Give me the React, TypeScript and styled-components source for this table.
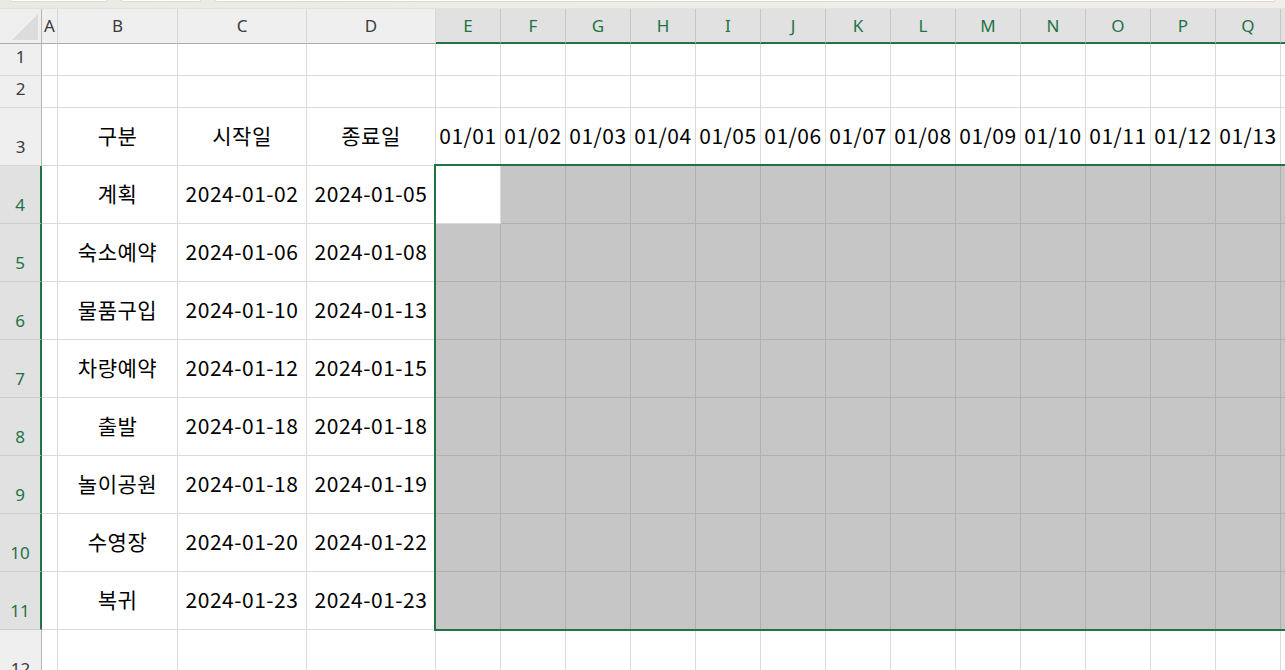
import React from "react";
import styled, { createGlobalStyle, css } from "styled-components";

const GlobalStyle = createGlobalStyle`
  html, body { margin: 0; padding: 0; background: #ffffff; overflow: hidden; }
  * { box-sizing: border-box; }
`;

const GREEN = "#217346";
const GRID = "#dadada";
const FILL = "#c6c6c6";
const FILL_LINE = "#b1b1b1";

const COLS = ["A", "B", "C", "D", "E", "F", "G", "H", "I", "J", "K", "L", "M", "N", "O", "P", "Q", ""];
const COL_WIDTHS = [16, 120, 129, 129, ...Array(14).fill(65)];
const ROW_HEIGHTS = [32, 32, 58, 58, 58, 58, 58, 58, 58, 58, 58, 58];
const DATES = ["01/01", "01/02", "01/03", "01/04", "01/05", "01/06", "01/07", "01/08", "01/09", "01/10", "01/11", "01/12", "01/13", ""];

const TASKS: [string, string, string][] = [
  ["계획", "2024-01-02", "2024-01-05"],
  ["숙소예약", "2024-01-06", "2024-01-08"],
  ["물품구입", "2024-01-10", "2024-01-13"],
  ["차량예약", "2024-01-12", "2024-01-15"],
  ["출발", "2024-01-18", "2024-01-18"],
  ["놀이공원", "2024-01-18", "2024-01-19"],
  ["수영장", "2024-01-20", "2024-01-22"],
  ["복귀", "2024-01-23", "2024-01-23"],
];

const Page = styled.div`
  width: 1285px;
  height: 670px;
  display: flex;
  flex-direction: column;
  overflow: hidden;
  background: #fff;
`;

const TopStrip = styled.div`
  height: 9px;
  flex: none;
  display: flex;
  gap: 14px;
  padding-left: 10px;
  background: linear-gradient(90deg, #e7ebe1 0%, #eceee6 45%, #f2ede9 100%);
  border-bottom: 1px solid #e2e2e2;
`;

const StripBox = styled.div<{ $w: number }>`
  width: ${(p) => p.$w}px;
  height: 2px;
  background: #ffffff;
  border: 1px solid #d9dcd4;
  border-top: none;
  border-radius: 0 0 3px 3px;
`;

const SheetArea = styled.div`
  position: relative;
  flex: 1;
  overflow: hidden;
`;

const Grid = styled.div`
  display: grid;
  grid-template-columns: 42px ${COL_WIDTHS.map((w) => `${w}px`).join(" ")};
  grid-template-rows: 35px ${ROW_HEIGHTS.map((h) => `${h}px`).join(" ")};
  width: max-content;
`;

const headerFont = css`
  font-family: "Noto Sans", "Open Sans", sans-serif;
  font-size: 17px;
`;

const Corner = styled.div`
  position: relative;
  background: #efefef;
  border-right: 1px solid #b5b5b5;
  border-bottom: 1px solid #ababab;
`;

const CornerTriangle = styled.span`
  position: absolute;
  right: 3px;
  bottom: 3px;
  width: 26px;
  height: 26px;
  background: #dcdcdc;
  clip-path: polygon(100% 0, 100% 100%, 0 100%);
`;

const ColHeader = styled.div<{ $sel: boolean }>`
  ${headerFont};
  display: flex;
  align-items: center;
  justify-content: center;
  padding-bottom: 1px;
  background: ${(p) => (p.$sel ? "#e1e1e1" : "#efefef")};
  color: ${(p) => (p.$sel ? GREEN : "#3b3b3b")};
  border-right: 1px solid ${(p) => (p.$sel ? "#c6c6c6" : "#d6d6d6")};
  border-bottom: ${(p) => (p.$sel ? `2px solid ${GREEN}` : "1px solid #ababab")};
  overflow: hidden;
`;

const RowHeader = styled.div<{ $sel: boolean }>`
  ${headerFont};
  display: flex;
  align-items: flex-end;
  justify-content: center;
  padding-bottom: 3px;
  background: ${(p) => (p.$sel ? "#e1e1e1" : "#efefef")};
  color: ${(p) => (p.$sel ? GREEN : "#3b3b3b")};
  border-right: ${(p) => (p.$sel ? `2px solid ${GREEN}` : "1px solid #b5b5b5")};
  border-bottom: 1px solid ${(p) => (p.$sel ? "#cdcdcd" : "#d6d6d6")};
  line-height: 30px;
  overflow: hidden;
`;

const Cell = styled.div<{ $fill?: boolean }>`
  font-family: "Noto Sans CJK KR", "Noto Sans", sans-serif;
  font-size: 21px;
  letter-spacing: 0.5px;
  color: #000;
  display: flex;
  align-items: center;
  justify-content: center;
  padding-bottom: 4px;
  white-space: nowrap;
  overflow: visible;
  background: ${(p) => (p.$fill ? FILL : "#ffffff")};
  border-right: 1px solid ${(p) => (p.$fill ? FILL_LINE : GRID)};
  border-bottom: 1px solid ${(p) => (p.$fill ? FILL_LINE : GRID)};
`;

const Selection = styled.div`
  position: absolute;
  left: 434px;
  top: 155px;
  width: 1000px;
  height: 467px;
  border: 2px solid ${GREEN};
  pointer-events: none;
`;

function rowContent(r: number): { text: string; fill: boolean }[] {
  return COLS.map((_, ci) => {
    let text = "";
    let fill = false;
    if (r === 3) {
      if (ci === 1) text = "구분";
      if (ci === 2) text = "시작일";
      if (ci === 3) text = "종료일";
      if (ci >= 4) text = DATES[ci - 4];
    }
    if (r >= 4 && r <= 11) {
      const t = TASKS[r - 4];
      if (ci === 1) text = t[0];
      if (ci === 2) text = t[1];
      if (ci === 3) text = t[2];
      if (ci >= 4) fill = !(r === 4 && ci === 4);
    }
    return { text, fill };
  });
}

export default function App() {
  return (
    <Page>
      <GlobalStyle />
      <TopStrip>
        <StripBox $w={97} />
        <StripBox $w={80} />
        <StripBox $w={1060} />
      </TopStrip>
      <SheetArea>
        <Grid>
          <Corner>
            <CornerTriangle />
          </Corner>
          {COLS.map((c, i) => (
            <ColHeader key={i} $sel={i >= 4}>
              {c}
            </ColHeader>
          ))}
          {ROW_HEIGHTS.map((_, ri) => {
            const r = ri + 1;
            const sel = r >= 4 && r <= 11;
            return (
              <React.Fragment key={r}>
                <RowHeader $sel={sel}>{r}</RowHeader>
                {rowContent(r).map((cell, ci) => (
                  <Cell key={ci} $fill={cell.fill}>
                    {cell.text}
                  </Cell>
                ))}
              </React.Fragment>
            );
          })}
        </Grid>
        <Selection />
      </SheetArea>
    </Page>
  );
}
